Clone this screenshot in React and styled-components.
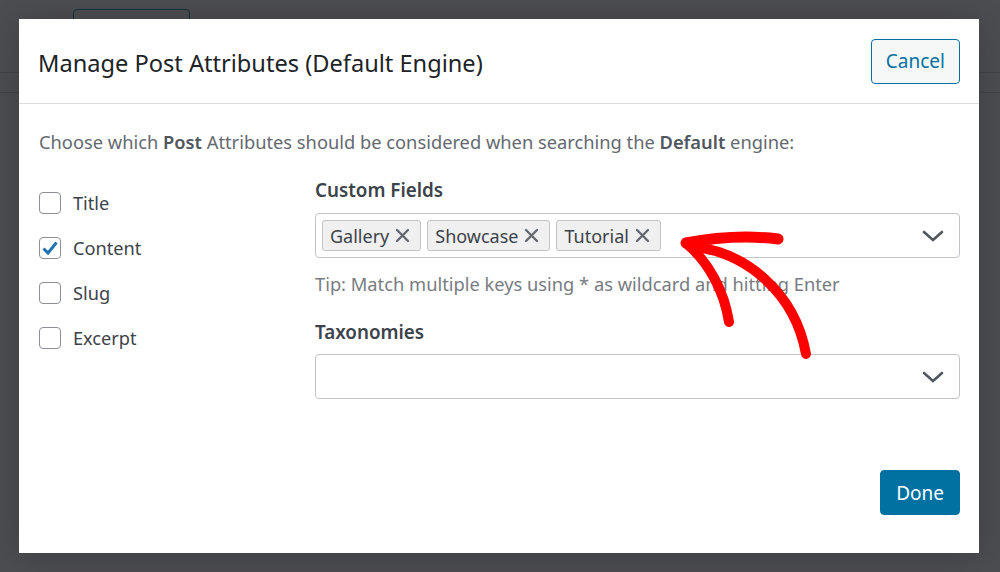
import React, { useState } from 'react';
import styled, { createGlobalStyle } from 'styled-components';

const GlobalStyle = createGlobalStyle`
  html, body {
    margin: 0;
    padding: 0;
  }
  body {
    font-family: "Noto Sans", "Open Sans", sans-serif;
    background: #4c4d51;
  }
  * {
    box-sizing: border-box;
  }
`;

const Screen = styled.div`
  position: relative;
  width: 1000px;
  height: 572px;
  overflow: hidden;
  background: #4c4d51;
`;

const BackBar = styled.div`
  height: ${(p) => p.h}px;
  border-bottom: 1px solid #424347;
  padding: 9px 0 0 73px;
`;

const GhostButton = styled.div`
  width: 117px;
  height: 40px;
  border: 1px solid #17303f;
  border-radius: 4px;
`;

const Overlay = styled.div`
  position: absolute;
  inset: 0;
  padding: 19px 21px 19px 19px;
  display: flex;
`;

const Modal = styled.div`
  flex: 1;
  background: #fff;
  display: flex;
  flex-direction: column;
  box-shadow: 0 3px 30px rgba(0, 0, 0, 0.2);
`;

const Header = styled.div`
  height: 85px;
  display: flex;
  align-items: center;
  justify-content: space-between;
  padding: 0 19px 0 20px;
  border-bottom: 1px solid #dcdcde;
`;

const Title = styled.h1`
  margin: 3px 0 0 -1px;
  font-size: 23.6px;
  font-weight: 400;
  color: #1d2327;
`;

const Button = styled.button`
  font-family: inherit;
  font-size: 19px;
  height: 45px;
  padding: 0 ${(p) => (p.primary ? 15 : 14)}px;
  border-radius: 4px;
  border: 1px solid #0071a1;
  background: ${(p) => (p.primary ? '#0071a1' : '#f6f7f7')};
  color: ${(p) => (p.primary ? '#fff' : '#0071a1')};
  cursor: pointer;
`;

const Body = styled.div`
  flex: 1;
  padding: 26px 19px 0 20px;
  position: relative;
`;

const Intro = styled.p`
  margin: 0;
  font-size: 18.3px;
  line-height: 24px;
  color: #646970;
  b {
    font-weight: 600;
    color: #50575e;
  }
`;

const Columns = styled.div`
  display: grid;
  grid-template-columns: 276px 1fr;
  margin-top: 24px;
`;

const CheckList = styled.div`
  display: flex;
  flex-direction: column;
  padding-top: 2px;
`;

const CheckRow = styled.label`
  display: flex;
  align-items: center;
  gap: 12px;
  height: 45px;
  font-size: 18.2px;
  color: #3c434a;
  cursor: pointer;
`;

const Box = styled.span`
  width: 22px;
  height: 22px;
  border: 1px solid #8c8f94;
  border-radius: 4px;
  display: flex;
  align-items: center;
  justify-content: center;
  background: #fff;
`;

const Fields = styled.div`
  display: flex;
  flex-direction: column;
`;

const FieldLabel = styled.div`
  font-size: 18.8px;
  font-weight: 600;
  line-height: 24px;
  color: #3c434a;
  margin-top: ${(p) => p.top || 0}px;
`;

const Select = styled.div`
  height: 45px;
  margin-top: ${(p) => p.top}px;
  border: 1px solid #c3c4c7;
  border-radius: 4px;
  display: flex;
  align-items: center;
  padding: 0 15px 0 6px;
  gap: 6px;
`;

const Tag = styled.span`
  height: 31px;
  display: flex;
  align-items: center;
  gap: 6px;
  padding: 0 10px 0 7px;
  background: #f0f0f1;
  border: 1px solid #c3c4c7;
  border-radius: 3px;
  font-size: 18px;
  color: #3c434a;
`;

const Spacer = styled.span`
  flex: 1;
`;

const Tip = styled.div`
  margin-top: 14px;
  font-size: 18.3px;
  line-height: 24px;
  color: #787c82;
`;

const Footer = styled.div`
  display: flex;
  justify-content: flex-end;
  padding: 0 19px 38px;
`;

const Arrow = styled.svg`
  position: absolute;
  left: 0;
  top: 0;
  pointer-events: none;
`;

const XIcon = () => (
  <svg width="15" height="15" viewBox="0 0 15 15">
    <path d="M2 2 L13 13 M13 2 L2 13" stroke="#646970" strokeWidth="2.4" strokeLinecap="round" />
  </svg>
);

const Chevron = () => (
  <svg width="22" height="12" viewBox="0 0 22 12">
    <path d="M2 2 L11 10 L20 2" fill="none" stroke="#50575e" strokeWidth="2.6" strokeLinecap="round" />
  </svg>
);

const Check = () => (
  <svg width="18" height="16" viewBox="0 0 18 16">
    <path d="M2.5 8.5 L7 13 L15.5 2.5" fill="none" stroke="#2271b1" strokeWidth="3" />
  </svg>
);

const attributes = [
  { name: 'Title', on: false },
  { name: 'Content', on: true },
  { name: 'Slug', on: false },
  { name: 'Excerpt', on: false },
];

export default function App() {
  const [checked, setChecked] = useState(attributes.map((a) => a.on));
  const toggle = (i) => setChecked((c) => c.map((v, j) => (j === i ? !v : v)));

  return (
    <Screen>
      <GlobalStyle />
      <BackBar h={73}>
        <GhostButton />
      </BackBar>
      <BackBar h={20} />
      <Overlay>
        <Modal>
          <Header>
            <Title>Manage Post Attributes (Default Engine)</Title>
            <Button>Cancel</Button>
          </Header>
          <Body>
            <Intro>
              Choose which <b>Post</b> Attributes should be considered when searching the <b>Default</b> engine:
            </Intro>
            <Columns>
              <CheckList>
                {attributes.map((a, i) => (
                  <CheckRow key={a.name} onClick={() => toggle(i)}>
                    <Box>{checked[i] && <Check />}</Box>
                    {a.name}
                  </CheckRow>
                ))}
              </CheckList>
              <Fields>
                <FieldLabel>Custom Fields</FieldLabel>
                <Select top={11}>
                  {['Gallery', 'Showcase', 'Tutorial'].map((t) => (
                    <Tag key={t}>
                      {t}
                      <XIcon />
                    </Tag>
                  ))}
                  <Spacer />
                  <Chevron />
                </Select>
                <Tip>Tip: Match multiple keys using * as wildcard and hitting Enter</Tip>
                <FieldLabel top={24}>Taxonomies</FieldLabel>
                <Select top={10}>
                  <Spacer />
                  <Chevron />
                </Select>
              </Fields>
            </Columns>
            <Arrow width="960" height="450" viewBox="0 0 960 450">
              <g transform="translate(-19 -104)" fill="none" stroke="#ff0000" strokeLinecap="round" strokeLinejoin="round">
                <path d="M686 243 C712 238 745 235 778 239" strokeWidth="11" />
                <path d="M688 245 C708 262 724 290 729 322" strokeWidth="10" />
                <path d="M694 247 C745 252 795 292 806 354" strokeWidth="10" />
              </g>
            </Arrow>
          </Body>
          <Footer>
            <Button primary>Done</Button>
          </Footer>
        </Modal>
      </Overlay>
    </Screen>
  );
}
